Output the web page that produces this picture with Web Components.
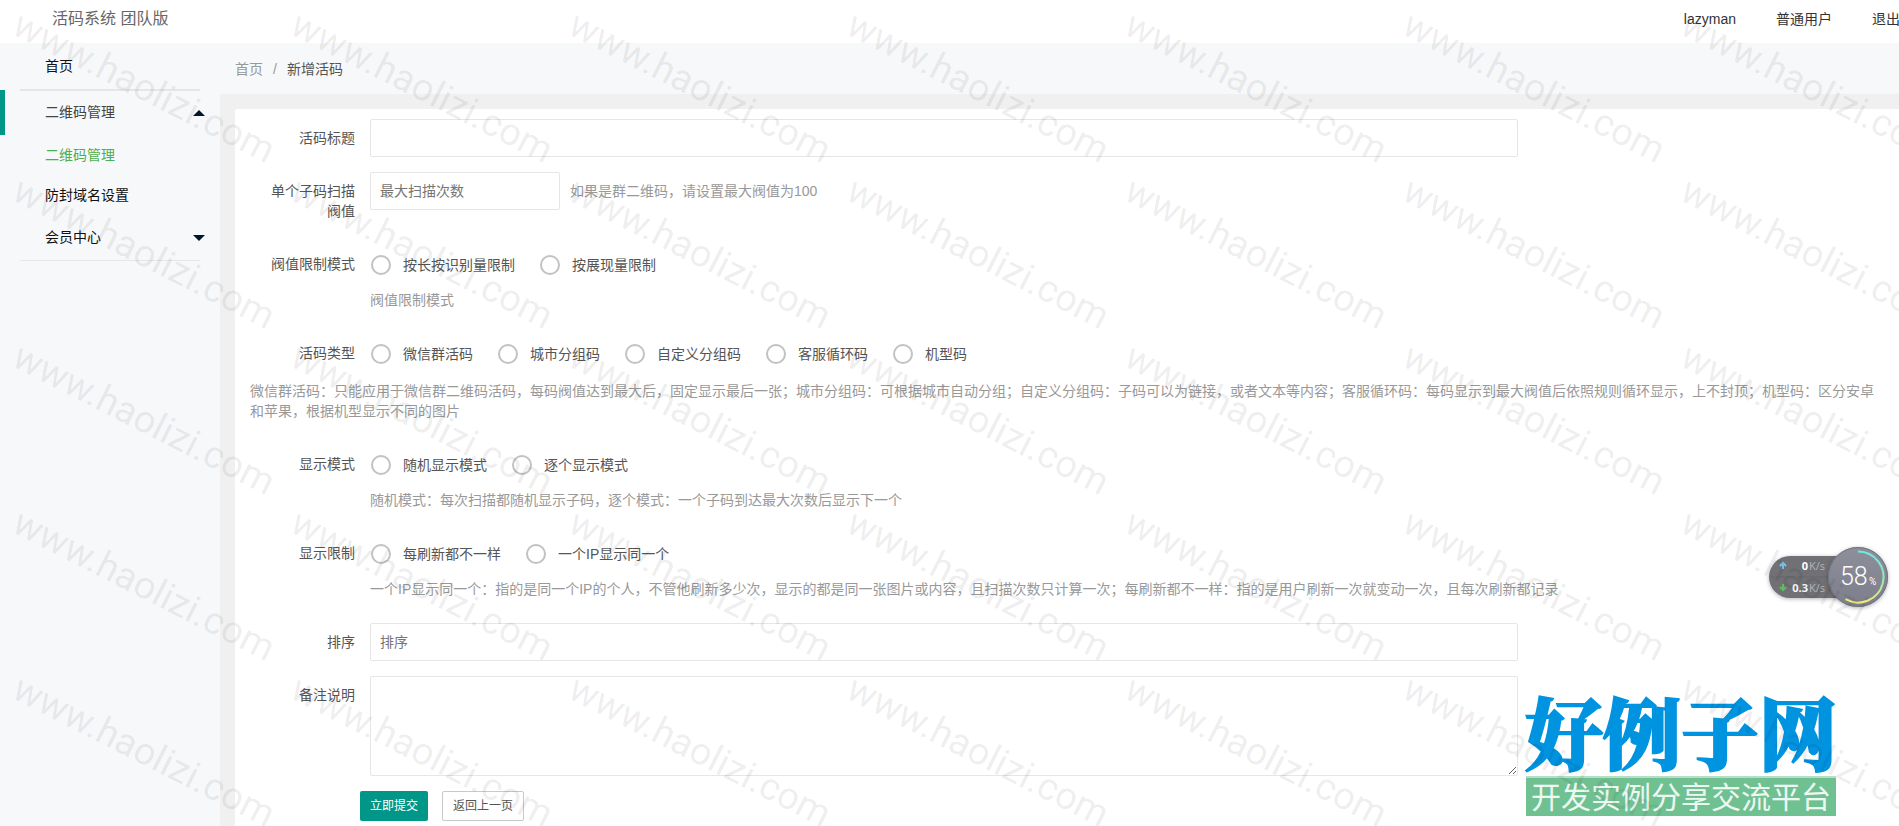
<!DOCTYPE html>
<html lang="zh-CN">
<head>
<meta charset="utf-8">
<title>新增活码</title>
<meta name="viewport" content="width=device-width, initial-scale=1">
<style>
  body { margin: 0; font: 14px/20px "Liberation Sans", "Noto Sans CJK SC", sans-serif; color: #333; background: #fff; }
</style>
</head>
<body>
<app-shell>
  <app-header slot="header" brand="活码系统 团队版">
    <a href="#user">lazyman</a>
    <a href="#role">普通用户</a>
    <a href="#logout">退出</a>
  </app-header>
  <side-nav slot="side">
    <nav-group label="首页" kind="link"></nav-group>
    <nav-group label="二维码管理" kind="open">
      <nav-link label="二维码管理" current></nav-link>
      <nav-link label="防封域名设置"></nav-link>
    </nav-group>
    <nav-group label="会员中心" kind="closed"></nav-group>
  </side-nav>
  <bread-crumb slot="crumbs" parent="首页" current="新增活码"></bread-crumb>
  <form-card>
    <text-field label="活码标题"></text-field>
    <text-field label="单个子码扫描阀值" placeholder="最大扫描次数" short hint="如果是群二维码，请设置最大阀值为100"></text-field>
    <radio-field label="阀值限制模式" options="按长按识别量限制|按展现量限制">阀值限制模式</radio-field>
    <radio-field label="活码类型" wide options="微信群活码|城市分组码|自定义分组码|客服循环码|机型码">微信群活码：只能应用于微信群二维码活码，每码阀值达到最大后，固定显示最后一张；城市分组码：可根据城市自动分组；自定义分组码：子码可以为链接，或者文本等内容；客服循环码：每码显示到最大阀值后依照规则循环显示，上不封顶；机型码：区分安卓和苹果，根据机型显示不同的图片</radio-field>
    <radio-field label="显示模式" options="随机显示模式|逐个显示模式">随机模式：每次扫描都随机显示子码，逐个模式：一个子码到达最大次数后显示下一个</radio-field>
    <radio-field label="显示限制" options="每刷新都不一样|一个IP显示同一个">一个IP显示同一个：指的是同一个IP的个人，不管他刷新多少次，显示的都是同一张图片或内容，且扫描次数只计算一次；每刷新都不一样：指的是用户刷新一次就变动一次，且每次刷新都记录</radio-field>
    <text-field label="排序" placeholder="排序"></text-field>
    <text-field label="备注说明" multiline></text-field>
    <form-actions></form-actions>
  </form-card>
</app-shell>
<site-logo></site-logo>
<speed-meter></speed-meter>
<water-mark text="www.haolizi.com"></water-mark>

<script>
const define = (name, render, after) => customElements.define(name, class extends HTMLElement {
  connectedCallback() {
    if (this.shadowRoot) return;
    this.attachShadow({ mode: 'open' }).innerHTML = render(this);
    if (after) after(this);
  }
});
const attr = (el, name) => el.getAttribute(name) || '';
const BASE = '*{box-sizing:border-box}a{color:inherit;text-decoration:none}';
const FIELD = `${BASE}
  :host{display:block}
  .row{display:flex}
  .label{flex:none;width:120px;padding:9px 15px;text-align:right;color:#555}
  .hint{padding:7px 10px 9px 0;color:#999}`;

define('app-shell', () => `<style>${BASE}
  :host{display:flex;flex-direction:column;min-height:100vh;overflow:hidden}
  .body{flex:1;display:flex;background:#f7f8fa}
  .side{flex:none;width:220px}
  main{flex:1;min-width:0;display:flex;flex-direction:column}
  .stage{flex:1;display:flex;flex-direction:column;background:#f0f0f0;padding:15px 0 0 15px}
  </style><slot name="header"></slot>
  <div class="body"><div class="side"><slot name="side"></slot></div>
  <main><slot name="crumbs"></slot><div class="stage"><slot></slot></div></main></div>`);

define('app-header', el => `<style>${BASE}
  :host{display:block}
  header{display:flex;justify-content:space-between;align-items:center;height:43px;padding:0 0 5px 52px;background:#fff;overflow:hidden}
  .brand{font-size:16px;line-height:24px;color:#666}
  nav{display:flex;margin-right:-21px}
  ::slotted(a){padding:0 20px;color:#333;text-decoration:none;white-space:nowrap}
  </style><header><span class="brand">${attr(el, 'brand')}</span><nav><slot></slot></nav></header>`);

define('side-nav', () => `<style>:host{display:block}</style><nav><slot></slot></nav>`);

define('nav-group', el => {
  const kind = attr(el, 'kind');
  return `<style>${BASE}
  :host{display:block;position:relative}
  .head{display:flex;align-items:center;justify-content:space-between;height:45px;margin:0 15px 0 45px;color:#111}
  .head span{padding-bottom:2px}
  .link{height:46px}
  .link span{padding-bottom:0}
  .open{color:#444}
  .line{height:1px;margin:0 20px;background:#e6e6e6}
  .link ~ .line{height:2px;margin-bottom:-1px}
  .open ~ .line{display:none}
  .bar{position:absolute;left:0;top:0;width:5px;height:45px;background:#009688}
  </style>${kind === 'open' ? '<div class="bar"></div>' : ''}
  <a class="head ${kind}" href="#nav"><span>${attr(el, 'label')}</span>${kind === 'link' ? '' :
    `<svg width="12" height="6" viewBox="0 0 12 6"><path fill="#001529" d="${kind === 'open' ? 'M0 6 6 0l6 6z' : 'M0 0h12L6 6z'}"/></svg>`}</a>
  <slot></slot><div class="line"></div>`;
});

define('nav-link', el => `<style>${BASE}
  :host{display:block}
  a{display:flex;align-items:center;height:40px;padding-left:45px;color:#111}
  :host([current]) a{color:#4caf50}
  </style><a href="#sub">${attr(el, 'label')}</a>`);

define('bread-crumb', el => `<style>${BASE}
  :host{display:flex;align-items:center;gap:10px;height:51px;padding:0 15px;color:#999}
  b{font-weight:400;color:#555}
  </style><a href="#home">${attr(el, 'parent')}</a><span>/</span><b>${attr(el, 'current')}</b>`);

define('form-card', () => `<style>${BASE}
  :host{flex:1;display:block;background:#fff;border-radius:2px 0 0 0}
  form{display:flex;flex-direction:column;gap:15px;padding:10px 9px 5px 15px}
  </style><form><slot></slot></form>`);

define('text-field', el => {
  const ph = attr(el, 'placeholder');
  return `<style>${FIELD}
  .control{flex:none;width:70%}
  :host([short]) .control{width:190px}
  input,textarea{display:block;width:100%;height:38px;margin:0;padding:0 9px;border:1px solid #e6e6e6;border-radius:2px;background:#fff;color:#555;font:inherit;outline:0}
  textarea{height:100px;padding:6px 9px;resize:vertical}
  ::placeholder{color:#757575}
  .hint{padding:9px 0 9px 10px}
  </style><div class="row"><label class="label" for="f">${attr(el, 'label')}</label>
  <div class="control">${el.hasAttribute('multiline') ? '<textarea id="f"></textarea>' : `<input id="f" type="text" placeholder="${ph}">`}</div>
  ${el.hasAttribute('hint') ? `<span class="hint">${attr(el, 'hint')}</span>` : ''}</div>`;
});

define('radio-field', el => {
  const wide = el.hasAttribute('wide');
  const hint = `<div class="hint${wide ? ' wide' : ''}"><slot></slot></div>`;
  return `<style>${FIELD}
  .options{display:flex;flex-wrap:wrap;gap:0 25px;padding-left:1px}
  .options label{display:flex;align-items:center;gap:12px;height:38px;padding-top:2px;color:#555;white-space:nowrap}
  input{appearance:none;width:20px;height:20px;margin:0;border:2px solid #c2c2c2;border-radius:50%;background:#fff}
  input:checked{border:6px solid #5fb878}
  .wide{padding:9px 10px 9px 0}
  </style><div class="row" role="radiogroup" aria-labelledby="l"><span class="label" id="l">${attr(el, 'label')}</span>
  <div><div class="options">${attr(el, 'options').split('|').map(o => `<label><input type="radio" name="r">${o}</label>`).join('')}</div>${wide ? '' : hint}</div></div>${wide ? hint : ''}`;
});

define('form-actions', () => `<style>${BASE}
  :host{display:flex;gap:14px;padding-left:110px}
  button{height:30px;padding:0 10px;border:0;border-radius:2px;background:#009688;color:#fff;font:inherit;font-size:12px;line-height:28px}
  .plain{border:1px solid #c9c9c9;background:#fff;color:#555}
  </style><button type="button">立即提交</button><button type="button" class="plain">返回上一页</button>`);

define('site-logo', () => `<style>${BASE}
  :host{position:absolute;left:1525px;top:692px;width:312px;text-align:center;white-space:nowrap}
  .name{height:84px;font:900 78px/76px "Noto Serif CJK SC","Noto Sans CJK SC",serif;color:#0093e0;-webkit-text-stroke:2px #0093e0}
  .tag{height:40px;margin:0 1px;border-top:2px solid #b4dec5;background:#70c192;color:#eef8f2;font:30px/34px "Noto Sans CJK SC",sans-serif}
  </style><div class="name">好例子网</div><div class="tag">开发实例分享交流平台</div>`);

define('speed-meter', () => `<style>
  :host{position:absolute;right:5px;top:541px;width:132px;height:72px}
  svg{display:block}
  </style><svg width="132" height="72" viewBox="0 0 132 72">
  <defs>
    <linearGradient id="disc" x1="0" y1="0" x2="0" y2="1"><stop offset="0" stop-color="#8d909b"/><stop offset="1" stop-color="#7c7f8b"/></linearGradient>
    <linearGradient id="arc" x1="0" y1="0" x2="0" y2="1"><stop offset="0" stop-color="#72e6e6"/><stop offset=".55" stop-color="#96e8b8"/><stop offset="1" stop-color="#f2ea70"/></linearGradient>
    <filter id="sh" x="-20%" y="-20%" width="140%" height="150%"><feDropShadow dx="0" dy="1" stdDeviation="2" flood-opacity=".3"/></filter>
  </defs>
  <path filter="url(#sh)" fill="#6f7075" d="M28 15h62v42H28a21 21 0 0 1 0-42z"/>
  <path stroke="#67686d" d="M9 36h60"/>
  <path fill="none" stroke="#7fc8f4" stroke-width="2" d="M21 28v-6M18 25l3-3 3 3"/>
  <path fill="none" stroke="#57c05e" stroke-width="2" d="M21 43v6M18 46l3 3 3-3"/>
  <g font-family="Open Sans, sans-serif" font-size="11">
    <g fill="#fff" font-weight="700" text-anchor="end"><text x="46" y="29">0</text><text x="46" y="51">0.3</text></g>
    <g fill="#b5b6ba"><text x="47" y="29">K/s</text><text x="47" y="51">K/s</text></g>
  </g>
  <circle filter="url(#sh)" cx="96" cy="36" r="30" fill="url(#disc)"/>
  <circle cx="96" cy="36" r="29.500" fill="none" stroke="#72747f"/>
  <path fill="none" stroke="url(#arc)" stroke-width="2" d="M96 10.500a25.500 25.500 0 1 1-12.500 47.700"/>
  <g fill="#fff" font-family="Roboto, sans-serif"><text x="78" y="44" font-size="25" font-weight="300">58</text><text x="107" y="44" font-size="10">%</text></g>
  </svg>`);

define('water-mark', () => `<style>
  :host{position:absolute;inset:0;overflow:hidden;pointer-events:none}
  svg{display:block;width:100%;height:100%}
  text{font:38px Roboto,"Liberation Sans",sans-serif;fill:#000;fill-opacity:.08}
  </style><svg aria-hidden="true"></svg>`, el => {
  const svg = el.shadowRoot.querySelector('svg');
  for (let y = 33; y < innerHeight; y += 166) {
    for (let x = 10; x < innerWidth; x += 278) {
      const t = document.createElementNS('http://www.w3.org/2000/svg', 'text');
      t.setAttribute('transform', `translate(${x} ${y}) rotate(27)`);
      t.textContent = attr(el, 'text');
      svg.append(t);
    }
  }
});
</script>
</body>
</html>
